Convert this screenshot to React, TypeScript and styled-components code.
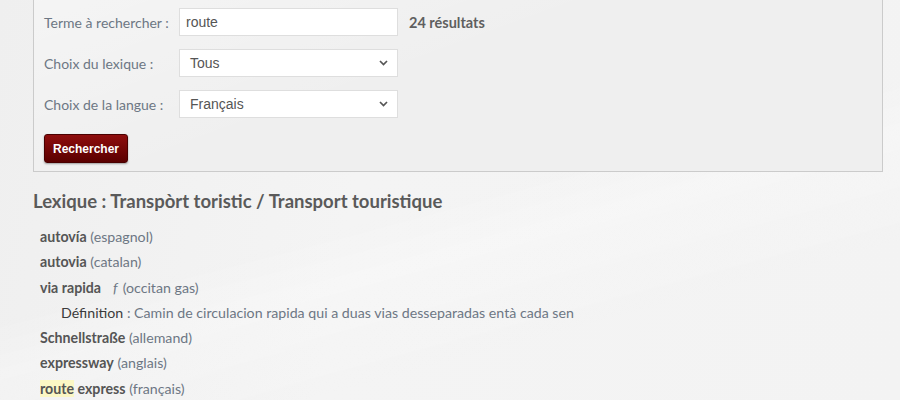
import React from 'react';
import styled, { createGlobalStyle } from 'styled-components';

const GlobalStyle = createGlobalStyle`
  html, body {
    margin: 0;
    padding: 0;
    background: #f3f3f3;
  }
  body {
    font-family: Lato, "Liberation Sans", sans-serif;
    background:
      linear-gradient(165deg, transparent 0%, transparent 50%, rgba(255,255,255,0.25) 58%, transparent 75%),
      linear-gradient(100deg, #efefef 0%, #f4f4f4 40%, #f3f3f3 100%);
    min-height: 400px;
  }
`;

const Page = styled.div`
  width: 850px;
  margin-left: 33px;
`;

const Panel = styled.form`
  border: 1px solid #cbcbcb;
  border-top: none;
  background:
    linear-gradient(160deg, rgba(255,255,255,0.35) 0%, rgba(255,255,255,0) 45%),
    #efefef;
  padding: 8px 11px 8px 10px;
  display: flex;
  flex-direction: column;
  gap: 13px;
`;

const Row = styled.div`
  display: flex;
  align-items: center;
  height: 28px;
`;

const Label = styled.label`
  width: 135px;
  font-size: 14px;
  color: #6d7784;
`;

const Field = styled.input`
  box-sizing: border-box;
  width: 219px;
  height: 28px;
  border: 1px solid #dedede;
  background: #fff;
  padding: 0 6px;
  font-family: "Liberation Sans", Arial, sans-serif;
  font-size: 14px;
  color: #555;
  outline: none;
`;

const Select = styled.div`
  box-sizing: border-box;
  width: 219px;
  height: 28px;
  border: 1px solid #dedede;
  background: #fff;
  padding: 0 9px 0 10px;
  display: flex;
  align-items: center;
  justify-content: space-between;
  font-family: "Liberation Sans", Arial, sans-serif;
  font-size: 14px;
  color: #555;
`;

const Count = styled.span`
  margin-left: 11px;
  font-size: 14.5px;
  font-weight: 700;
  color: #5f5f5f;
`;

const Button = styled.button`
  width: 84px;
  height: 29px;
  margin-top: 3px;
  border: 1px solid #4a0000;
  border-radius: 3px;
  background: linear-gradient(#8e0d0d, #5a0000);
  box-shadow: 0 1px 2px rgba(0,0,0,0.35);
  color: #fff;
  font-family: "Liberation Sans", Arial, sans-serif;
  font-size: 12px;
  font-weight: 700;
  padding: 0;
`;

const Heading = styled.h2`
  margin: 17px 0 11px;
  font-size: 18.5px;
  font-weight: 700;
  color: #5a5a5a;
  line-height: 24px;
`;

const List = styled.div`
  padding-left: 7px;
  display: flex;
  flex-direction: column;
`;

const Entry = styled.div<{ $indent?: boolean }>`
  height: 25.3px;
  line-height: 25px;
  font-size: 14.2px;
  color: #6d7784;
  padding-left: ${(p) => (p.$indent ? '21px' : '0')};
  white-space: nowrap;
`;

const Term = styled.b`
  color: #555;
  font-weight: 700;
`;

const Mark = styled.span`
  background: #fbf7c4;
`;

const Gender = styled.i`
  margin: 0 5px 0 12px;
  color: #6d7784;
`;

const DefLabel = styled.span`
  color: #3b3b3b;
`;

function Chevron() {
  return (
    <svg width="9" height="6" viewBox="0 0 9 6">
      <path d="M1 1 L4.5 4.5 L8 1" fill="none" stroke="#555" strokeWidth="1.7" />
    </svg>
  );
}

export default function App() {
  return (
    <Page>
      <GlobalStyle />
      <Panel onSubmit={(e) => e.preventDefault()}>
        <Row>
          <Label>Terme à rechercher :</Label>
          <Field defaultValue="route" />
          <Count>24 résultats</Count>
        </Row>
        <Row>
          <Label>Choix du lexique :</Label>
          <Select>Tous<Chevron /></Select>
        </Row>
        <Row>
          <Label>Choix de la langue :</Label>
          <Select>Français<Chevron /></Select>
        </Row>
        <Button type="submit">Rechercher</Button>
      </Panel>
      <Heading>Lexique : Transpòrt toristic / Transport touristique</Heading>
      <List>
        <Entry><Term>autovía</Term> (espagnol)</Entry>
        <Entry><Term>autovia</Term> (catalan)</Entry>
        <Entry><Term>via rapida</Term><Gender>f</Gender>(occitan gas)</Entry>
        <Entry $indent><DefLabel>Définition</DefLabel> : Camin de circulacion rapida qui a duas vias desseparadas entà cada sen</Entry>
        <Entry><Term>Schnellstraße</Term> (allemand)</Entry>
        <Entry><Term>expressway</Term> (anglais)</Entry>
        <Entry><Term><Mark>route</Mark> express</Term> (français)</Entry>
      </List>
    </Page>
  );
}
